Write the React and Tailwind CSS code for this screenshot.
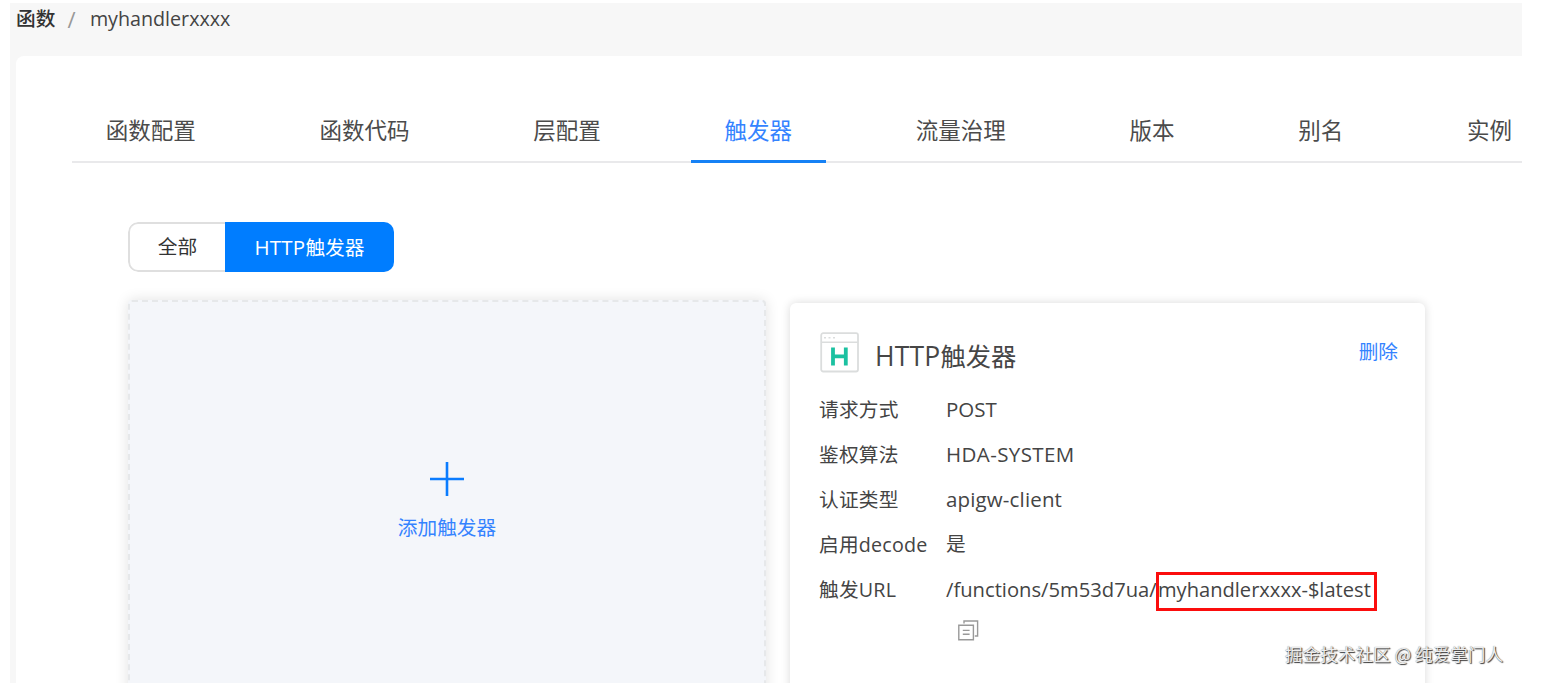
import React, { useState } from 'react';
import clsx from 'clsx';

const TABS = ['函数配置', '函数代码', '层配置', '触发器', '流量治理', '版本', '别名', '实例'];

// label/value rows of the trigger card
const DETAILS = [
    { label: '请求方式', value: 'POST', spacing: 'tracking-normal' },
    { label: '鉴权算法', value: 'HDA-SYSTEM', spacing: 'tracking-[0.4px]' },
    { label: '认证类型', value: 'apigw-client', spacing: 'tracking-[0.15px]' },
    { label: '启用decode', value: '是', spacing: 'tracking-normal' },
];

const HttpIcon = () => (
    <svg width="39" height="41" viewBox="0 0 39 41" fill="none" className="shrink-0">
        <rect x="1.2" y="1.2" width="36.8" height="38.3" rx="2" stroke="#dbdddd" strokeWidth="1.8" />
        <path d="M1 10.2h37" stroke="#dbdddd" strokeWidth="1.6" />
        <path d="M4 5.8h2M8.5 5.8h2M13 5.8h2" stroke="#dbdddd" strokeWidth="1.6" />
        <path d="M13 15.5v18M25.8 15.5v18M13 24.3h12.8" stroke="#1bc1a1" strokeWidth="3.8" />
    </svg>
);

const CopyIcon = () => (
    <svg width="21" height="21" viewBox="0 0 21 21" fill="none" stroke="#999" strokeWidth="1.4">
        <path d="M.8 5.2h14.6v14.6H.8z" />
        <path d="M6 3.6V1h13.6v15h-2.8" />
        <path d="M4.8 10.4h6.8M4.8 14.2h6.8" />
    </svg>
);

const TabBar = ({ active, onChange }) => (
    <div className="flex gap-[56.25px] h-[107px] border-b-2 border-[#e9e9eb] ml-14">
        {TABS.map(tab => (
            <button
                key={tab}
                onClick={() => onChange(tab)}
                className={clsx(
                    'shrink-0 px-[33.75px] pt-[46px] h-[107px] text-[22.5px] leading-[34px] whitespace-nowrap border-b-3 -mb-0.5',
                    tab === active ? 'text-[#3483ff] border-[#1681f5]' : 'text-[#4b4b4b] border-transparent'
                )}
            >
                {tab}
            </button>
        ))}
    </div>
);

const AddCard = () => (
    <div className="w-[638px] h-[420px] shrink-0 bg-[#f4f6fa] border-2 border-dashed border-[#e6e8ea] rounded shadow-[0_0_14px_rgba(0,0,0,0.12)] flex flex-col items-center">
        <svg width="34" height="34" viewBox="0 0 34 34" className="mt-[160px]">
            <path d="M17 0v34M0 17h34" stroke="#0a7cff" strokeWidth="2.6" />
        </svg>
        <span className="mt-[17px] text-[19.7px] leading-[30px] text-[#3483ff]">添加触发器</span>
    </div>
);

const TriggerCard = () => (
    <div className="w-[635px] h-[420px] mt-[3px] shrink-0 bg-white rounded-md shadow-[0_0_10px_rgba(0,0,0,0.15)] pl-[29px] pr-[27px]">
        <div className="flex h-[84px]">
            <div className="pt-[29px] pl-[1px]"><HttpIcon /></div>
            <h3 className="ml-4 pt-[34px] text-[25.3px] leading-[38px] text-[#464646]">
                <span className="text-[26.5px] tracking-[0.2px]">HTTP</span>触发器
            </h3>
            <button className="ml-auto self-start mt-[34px] text-[19.7px] leading-[30px] text-[#3483ff]">删除</button>
        </div>
        {DETAILS.map(row => (
            <div key={row.label} className="flex h-[45px] items-center text-[19.7px] text-[#444]">
                <span className="w-[127px] tracking-[0.2px]">{row.label}</span>
                <span className={clsx('-mt-px', row.value === '是' ? 'text-[19.7px]' : 'text-[20.5px]', row.spacing)}>{row.value}</span>
            </div>
        ))}
        <div className="flex h-[45px] items-center text-[19.7px] text-[#444] whitespace-nowrap">
            <span className="w-[127px] tracking-[0.2px]">触发URL</span>
            <span className="w-[210px] text-[20.2px]">/functions/5m53d7ua/</span>
            <span className="w-[221px] h-[39px] mt-[3px] shrink-0 border-3 border-[#fb0d0d] leading-[29px] text-[20.1px]">
                <span className="-ml-px">myhandlerxxxx-$latest</span>
            </span>
        </div>
        <div className="ml-[139px] mt-[8px]"><CopyIcon /></div>
    </div>
);

export default function App() {
    const [tab, setTab] = useState('触发器');
    const [kind, setKind] = useState('http');

    return (
        <div className="h-[700px] bg-white overflow-hidden pt-[3px] pl-[10px] font-['Open_Sans','Noto_Sans_CJK_SC',sans-serif]">
            <div className="relative w-[1512px] h-[680px] bg-[#f7f7f7] overflow-hidden">
                <div className="flex h-[53px] pl-[6px] pt-px text-[19.7px] leading-[30px] text-[#444]">
                    <span className="font-medium text-[#333]">函数</span>
                    <span className="ml-3 w-[22.5px] text-[22px] text-[#999]">/</span>
                    <span>myhandlerxxxx</span>
                </div>

                <div className="ml-[6px] h-[640px] bg-white rounded-tl-lg">
                    <TabBar active={tab} onChange={setTab} />

                    <div className="pl-[112px] pt-[59px]">
                        <div className="flex w-[266px] h-[50px] rounded-[10px] overflow-hidden text-[19.7px]">
                            <button
                                onClick={() => setKind('all')}
                                className="w-[97px] border-2 border-r-0 border-[#dfdfdf] rounded-l-[10px] text-[#333]"
                            >
                                全部
                            </button>
                            <button
                                onClick={() => setKind('http')}
                                className={clsx('flex-1 whitespace-nowrap', kind === 'http' ? 'bg-[#007dff] text-white' : 'text-[#333]')}
                            >
                                <span className="text-[20.5px] tracking-[0.2px]">HTTP</span>触发器
                            </button>
                        </div>

                        <div className="flex gap-6 mt-7">
                            <AddCard />
                            <TriggerCard />
                        </div>
                    </div>
                </div>

                <span className="absolute left-[1275px] top-[638px] text-[17.6px] leading-[26px] whitespace-nowrap text-[#eee] [text-shadow:1px_1px_1px_#333,0_0_1px_#777] font-['Noto_Sans_CJK_SC',sans-serif]">
                    掘金技术社区 @ 纯爱掌门人
                </span>
            </div>
        </div>
    );
}
